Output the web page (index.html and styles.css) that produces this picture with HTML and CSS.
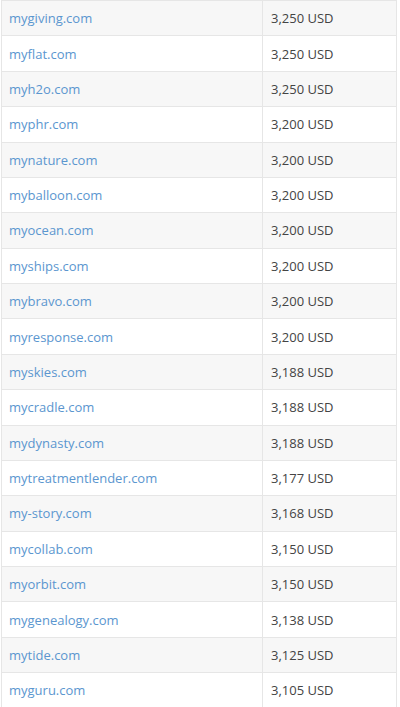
FILE: index.html
```html
<!DOCTYPE html>
<html>
<head>
<meta charset="utf-8">
<link rel="stylesheet" href="styles.css">
</head>
<body>
<div class="table">
  <div class="row"><div class="cell name"><a href="#">mygiving.com</a></div><div class="cell price">3,250 USD</div></div>
  <div class="row"><div class="cell name"><a href="#">myflat.com</a></div><div class="cell price">3,250 USD</div></div>
  <div class="row"><div class="cell name"><a href="#">myh2o.com</a></div><div class="cell price">3,250 USD</div></div>
  <div class="row"><div class="cell name"><a href="#">myphr.com</a></div><div class="cell price">3,200 USD</div></div>
  <div class="row"><div class="cell name"><a href="#">mynature.com</a></div><div class="cell price">3,200 USD</div></div>
  <div class="row"><div class="cell name"><a href="#">myballoon.com</a></div><div class="cell price">3,200 USD</div></div>
  <div class="row"><div class="cell name"><a href="#">myocean.com</a></div><div class="cell price">3,200 USD</div></div>
  <div class="row"><div class="cell name"><a href="#">myships.com</a></div><div class="cell price">3,200 USD</div></div>
  <div class="row"><div class="cell name"><a href="#">mybravo.com</a></div><div class="cell price">3,200 USD</div></div>
  <div class="row"><div class="cell name"><a href="#">myresponse.com</a></div><div class="cell price">3,200 USD</div></div>
  <div class="row"><div class="cell name"><a href="#">myskies.com</a></div><div class="cell price">3,188 USD</div></div>
  <div class="row"><div class="cell name"><a href="#">mycradle.com</a></div><div class="cell price">3,188 USD</div></div>
  <div class="row"><div class="cell name"><a href="#">mydynasty.com</a></div><div class="cell price">3,188 USD</div></div>
  <div class="row"><div class="cell name"><a href="#">mytreatmentlender.com</a></div><div class="cell price">3,177 USD</div></div>
  <div class="row"><div class="cell name"><a href="#">my-story.com</a></div><div class="cell price">3,168 USD</div></div>
  <div class="row"><div class="cell name"><a href="#">mycollab.com</a></div><div class="cell price">3,150 USD</div></div>
  <div class="row"><div class="cell name"><a href="#">myorbit.com</a></div><div class="cell price">3,150 USD</div></div>
  <div class="row"><div class="cell name"><a href="#">mygenealogy.com</a></div><div class="cell price">3,138 USD</div></div>
  <div class="row"><div class="cell name"><a href="#">mytide.com</a></div><div class="cell price">3,125 USD</div></div>
  <div class="row"><div class="cell name"><a href="#">myguru.com</a></div><div class="cell price">3,105 USD</div></div>
</div>
</body>
</html>
```
FILE: styles.css
```css
html, body {
  margin: 0;
  padding: 0;
  background: #ffffff;
}
body {
  font-family: "Open Sans", "Liberation Sans", sans-serif;
  font-size: 13px;
  color: #444444;
}
.table {
  margin: 0 0 0 1px;
  width: 396px;
  border-left: 1px solid #e6e6e6;
  border-right: 1px solid #e6e6e6;
  box-sizing: border-box;
}
.row {
  display: grid;
  grid-template-columns: 260px 1fr;
  height: 35.375px;
  box-sizing: border-box;
  border-top: 1px solid #e6e6e6;
}
.row:nth-child(odd) {
  background: #f7f7f7;
}
.cell {
  display: flex;
  align-items: center;
  padding: 0 8px;
  line-height: 18px;
  white-space: nowrap;
}
.name {
  padding-left: 7px;
}
.price {
  border-left: 1px solid #e6e6e6;
}
.name a {
  color: #5b96cf;
  text-decoration: none;
}
```
